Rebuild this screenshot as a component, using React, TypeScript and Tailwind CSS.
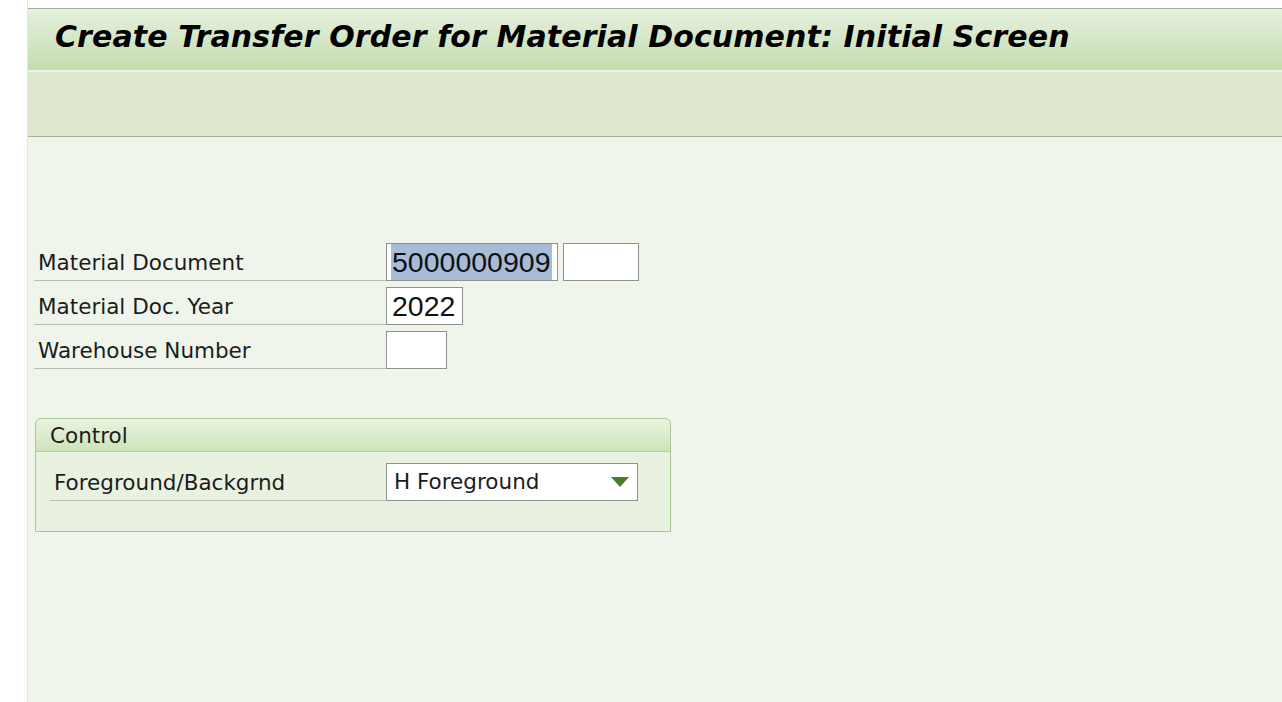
const label = "font-['DejaVu_Sans',sans-serif] text-[21.5px] text-[#1c1c1c]";

function FieldRow({ text, children }: { text: string; children: React.ReactNode }) {
  return (
    <div className="flex h-[44px] items-end">
      <div className={`flex h-full w-[352px] items-end border-b border-[#b8c0b2] pb-[1px] pl-[4px] ${label}`}>
        {text}
      </div>
      {children}
    </div>
  );
}

function Box({ w, value, selected }: { w: string; value?: string; selected?: boolean }) {
  return (
    <div
      className={`${w} flex h-[38px] items-center border border-[#8e928c] bg-white pl-[4px] font-['Liberation_Sans',Arial,sans-serif] text-[28.5px] leading-none text-[#111]`}
    >
      {value && (
        <span className={selected ? "bg-[#a8bcd8] px-[1px] py-[4px]" : "px-[1px]"}>{value}</span>
      )}
    </div>
  );
}

export default function App() {
  return (
    <div className="flex h-[702px] w-full overflow-hidden bg-white">
      <div className="w-[27px] shrink-0 bg-white" />
      <div className="flex flex-1 flex-col border-l border-[#dfe6da] pt-[8px]">
        <div className="flex h-[62px] items-center border-t border-[#9fb097] bg-gradient-to-b from-[#e6f0de] to-[#c4ddaf] pb-[6px] pl-[27px]">
          <h1 className="font-['DejaVu_Sans',sans-serif] text-[30px] font-bold italic tracking-[0.1px] text-black">
            Create Transfer Order for Material Document: Initial Screen
          </h1>
        </div>
        <div className="h-[67px] border-t-2 border-b border-t-[#eef6e6] border-b-[#a3b39b] bg-[#dde8cf]" />
        <div className="flex-1 bg-[#f0f5ec] pl-[6px] pt-[100px]">
          <FieldRow text="Material Document">
            <Box w="w-[172px]" value="5000000909" selected />
            <div className="ml-[5px]">
              <Box w="w-[76px]" />
            </div>
          </FieldRow>
          <FieldRow text="Material Doc. Year">
            <Box w="w-[77px]" value="2022" />
          </FieldRow>
          <FieldRow text="Warehouse Number">
            <Box w="w-[61px]" />
          </FieldRow>

          <div className="ml-[1px] mt-[49px] w-[636px] rounded-t-[6px] border border-[#aac696] bg-[#e9f2e0]">
            <div className={`flex h-[33px] items-center rounded-t-[6px] border-b border-[#b4cca2] bg-gradient-to-b from-[#eaf3e0] to-[#cde3ba] pl-[14px] pt-[3px] ${label}`}>
              Control
            </div>
            <div className="h-[79px] pl-[14px] pt-[10px]">
              <div className="flex h-[39px] items-end">
                <div className={`flex h-full w-[336px] items-end border-b border-[#b8c0b2] pb-[1px] pl-[4px] ${label}`}>
                  Foreground/Backgrnd
                </div>
                <div className="flex h-[38px] w-[252px] items-center justify-between border border-[#8e928c] bg-white pl-[7px] pr-[8px]">
                  <span className={label}>H Foreground</span>
                  <svg width="18" height="10" viewBox="0 0 18 10">
                    <path d="M0 0H18L9 10Z" fill="#4b7b2c" />
                  </svg>
                </div>
              </div>
            </div>
          </div>
        </div>
      </div>
    </div>
  );
}
